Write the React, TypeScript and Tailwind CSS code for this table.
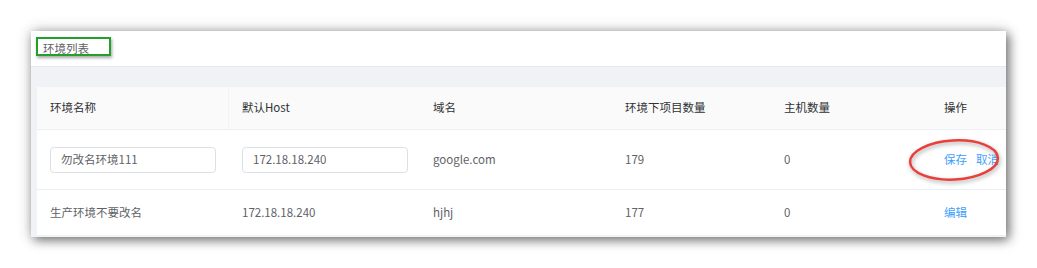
import React from "react";

const cols = [
  { key: "name", title: "环境名称", w: "w-[192px]" },
  { key: "host", title: "默认Host", w: "w-[191px]" },
  { key: "domain", title: "域名", w: "w-[192px]" },
  { key: "projects", title: "环境下项目数量", w: "w-[159px]" },
  { key: "hosts", title: "主机数量", w: "w-[160px]" },
  { key: "ops", title: "操作", w: "flex-1" },
];

const Cell = ({ w, children }: { w: string; children?: React.ReactNode }) => (
  <div className={`${w} flex items-center pl-[13px] shrink-0 overflow-hidden whitespace-nowrap`}>
    {children}
  </div>
);

const Input = ({ value }: { value: string }) => (
  <div className="w-[166px] h-[26px] border border-[#dcdfe6] rounded-[4px] px-[10px] flex items-center text-[#606266] bg-white">
    {value}
  </div>
);

export default function App() {
  return (
    <div
      className="relative w-[1037px] h-[268px] bg-white pl-[31px] pt-[31px] text-[11.5px]"
      style={{ fontFamily: '"Noto Sans CJK SC", "Liberation Sans", sans-serif' }}
    >
      <div className="relative w-[975px] bg-white shadow-[3px_3px_10px_rgba(0,0,0,0.5),0_0_14px_rgba(0,0,0,0.2)]">
        {/* title bar */}
        <div className="h-[36px] flex items-center pl-[12px] border-b border-[#e4e7ed] text-[#606266]">
          环境列表
        </div>
        <div className="absolute left-[5px] top-[6px] w-[75px] h-[19px] border-2 border-[#22a02a] shadow-[1px_2px_3px_rgba(0,0,0,0.35)]" />

        {/* content */}
        <div className="bg-[#f0f2f5] pl-[6px] pt-[20px] pb-[2px]">
          <div className="bg-white">
            <div className="h-[43px] flex bg-[#fafafa] border-b border-[#ebeef5] text-[#303133]">
              {cols.map((c, i) => (
                <Cell key={c.key} w={`${c.w} ${i === 0 ? "border-r border-[#f3f3f3]" : ""}`}>
                  {c.title}
                </Cell>
              ))}
            </div>
            <div className="h-[60px] flex border-b border-[#ebeef5] text-[#606266]">
              <Cell w="w-[192px]">
                <Input value="勿改名环境111" />
              </Cell>
              <Cell w="w-[191px]">
                <Input value="172.18.18.240" />
              </Cell>
              <Cell w="w-[192px]">google.com</Cell>
              <Cell w="w-[159px]">179</Cell>
              <Cell w="w-[160px]">0</Cell>
              <Cell w="flex-1">
                <span className="text-[#409eff]">保存</span>
                <span className="text-[#409eff] ml-[9px]">取消</span>
              </Cell>
            </div>
            <div className="h-[45px] flex text-[#606266]">
              <Cell w="w-[192px]">生产环境不要改名</Cell>
              <Cell w="w-[191px]">172.18.18.240</Cell>
              <Cell w="w-[192px]">hjhj</Cell>
              <Cell w="w-[159px]">177</Cell>
              <Cell w="w-[160px]">0</Cell>
              <Cell w="flex-1">
                <span className="text-[#409eff]">编辑</span>
              </Cell>
            </div>
          </div>
        </div>
      </div>

      {/* red annotation */}
      <svg
        className="absolute left-[905px] top-[135px]"
        width="98"
        height="50"
        viewBox="0 0 98 50"
        style={{ filter: "drop-shadow(1px 2px 2px rgba(0,0,0,0.35))" }}
      >
        <ellipse
          cx="49"
          cy="25"
          rx="44"
          ry="19.5"
          fill="none"
          stroke="#e8403a"
          strokeWidth="2.5"
          transform="rotate(-3 49 25)"
        />
      </svg>
    </div>
  );
}
